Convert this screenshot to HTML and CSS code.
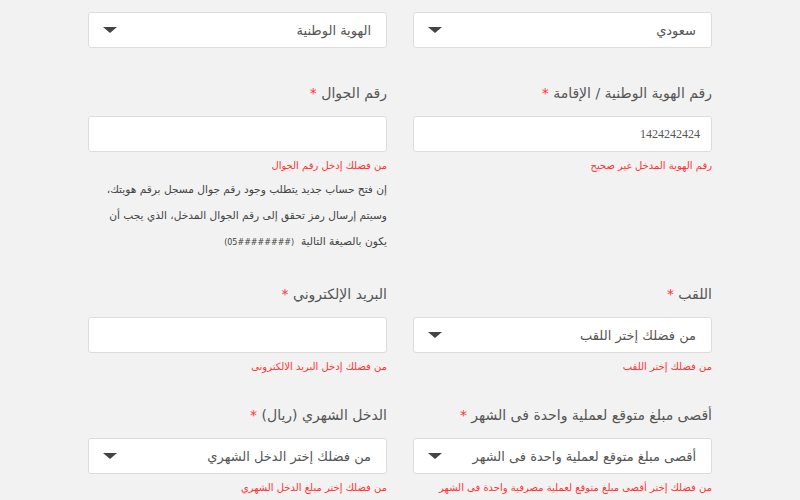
FILE: index.html
```html
<!DOCTYPE html>
<html lang="ar" dir="rtl">
<head>
<meta charset="utf-8">
<link rel="stylesheet" href="styles.css">
</head>
<body>
<div class="form">
  <div class="field first">
    <div class="select"><span class="value">سعودي</span><span class="caret"></span></div>
  </div>
  <div class="field first">
    <div class="select"><span class="value">الهوية الوطنية</span><span class="caret"></span></div>
  </div>

  <div class="field">
    <label class="label">رقم الهوية الوطنية / الإقامة <span class="req">*</span></label>
    <div class="input"><span class="num">1424242424</span></div>
    <div class="error">رقم الهوية المدخل غير صحيح</div>
  </div>
  <div class="field">
    <label class="label">رقم الجوال <span class="req">*</span></label>
    <div class="input"></div>
    <div class="error">من فضلك إدخل رقم الجوال</div>
    <p class="note">إن فتح حساب جديد يتطلب وجود رقم جوال مسجل برقم هويتك،<br>وسيتم إرسال رمز تحقق إلى رقم الجوال المدخل، الذي يجب أن<br>يكون بالصيغة التالية &nbsp;<span class="fmt">(05########)</span></p>
  </div>

  <div class="field">
    <label class="label">اللقب <span class="req">*</span></label>
    <div class="select"><span class="value">من فضلك إختر اللقب</span><span class="caret"></span></div>
    <div class="error">من فضلك إختر اللقب</div>
  </div>
  <div class="field">
    <label class="label">البريد الإلكتروني <span class="req">*</span></label>
    <div class="input"></div>
    <div class="error">من فضلك إدخل البريد الالكترونى</div>
  </div>

  <div class="field">
    <label class="label">أقصى مبلغ متوقع لعملية واحدة فى الشهر <span class="req">*</span></label>
    <div class="select"><span class="value">أقصى مبلغ متوقع لعملية واحدة فى الشهر</span><span class="caret"></span></div>
    <div class="error">من فضلك إختر أقصى مبلغ متوقع لعملية مصرفية واحدة فى الشهر</div>
  </div>
  <div class="field">
    <label class="label">الدخل الشهري (ريال) <span class="req">*</span></label>
    <div class="select"><span class="value">من فضلك إختر الدخل الشهري</span><span class="caret"></span></div>
    <div class="error">من فضلك إختر مبلغ الدخل الشهري</div>
  </div>
</div>
</body>
</html>
```
FILE: styles.css
```css
html, body {
  margin: 0;
  padding: 0;
  background: #f2f2f2;
}
body {
  font-family: "DejaVu Sans", "Noto Sans", sans-serif;
  color: #555;
  padding-top: 12px;
}
.form {
  width: 624px;
  margin: 0 auto;
  display: grid;
  grid-template-columns: 1fr 1fr;
  column-gap: 26px;
  row-gap: 29px;
  align-items: start;
}
.field.first {
  margin-bottom: 5px;
}
.label {
  display: block;
  font-size: 14px;
  line-height: 22px;
  height: 22px;
  margin-bottom: 12px;
  color: #555;
}
.req {
  color: #f33;
}
.select, .input {
  box-sizing: border-box;
  height: 36px;
  background: #fff;
  border: 1px solid #dcdcdc;
  border-radius: 3px;
  display: flex;
  align-items: center;
  justify-content: space-between;
  padding: 0 15px 0 14px;
}
.input {
  padding: 0 11px 0 12px;
}
.value {
  font-size: 13px;
  color: #555;
}
.num {
  font-family: "Liberation Serif", serif;
  font-size: 12px;
  color: #555;
}
.caret {
  width: 0;
  height: 0;
  border-left: 7px solid transparent;
  border-right: 7px solid transparent;
  border-top: 6px solid #444;
}
.error {
  margin-top: 6px;
  font-size: 10px;
  line-height: 16px;
  height: 16px;
  color: #f33;
}
.note {
  margin: 2px 0 0;
  font-size: 10.6px;
  line-height: 26px;
  height: 78px;
  overflow: visible;
  white-space: nowrap;
  color: #444;
}
.fmt {
  font-family: "DejaVu Sans", sans-serif;
  font-size: 8px;
  line-height: 1;
  direction: ltr;
  unicode-bidi: isolate;
}
```
